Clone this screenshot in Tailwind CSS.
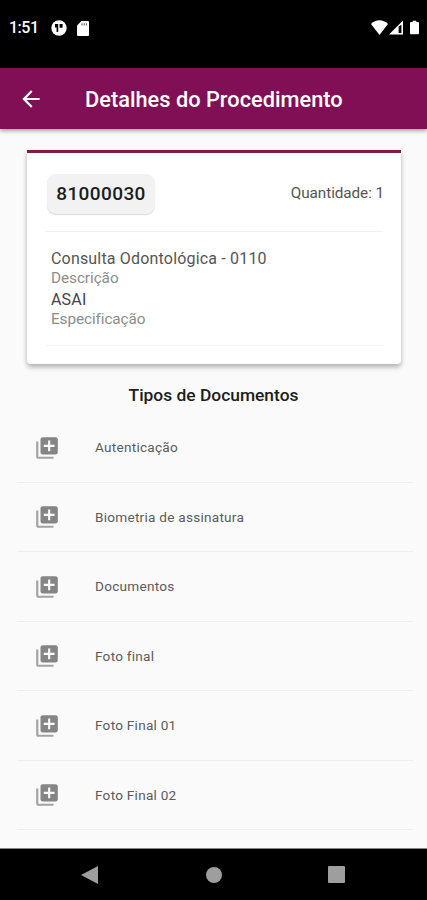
<!DOCTYPE html>
<html lang="pt-BR">
<head>
  <meta charset="UTF-8">
  <meta name="viewport" content="width=device-width, initial-scale=1.0">
  <script src="https://cdn.jsdelivr.net/npm/@tailwindcss/browser@4"></script>
  <title>Detalhes do Procedimento</title>
</head>
<body class="h-[900px] flex flex-col overflow-hidden bg-[#fafafa] font-['Roboto',sans-serif]">
  <svg class="hidden">
    <symbol id="library-add" viewBox="0 0 24 24">
      <path opacity=".75" d="M4 6H2v14c0 1.1.9 2 2 2h14v-2H4V6z"/>
      <path d="M20 2H8c-1.1 0-2 .9-2 2v12c0 1.1.9 2 2 2h12c1.1 0 2-.9 2-2V4c0-1.1-.9-2-2-2zm-1 9h-4v4h-2v-4H9V9h4V5h2v4h4v2z"/>
    </symbol>
  </svg>

  <!-- status bar -->
  <div class="h-[68px] shrink-0 bg-black text-white flex items-start justify-between pl-[9px] pr-2 pt-[18px]">
    <div class="flex items-center h-5">
      <span class="w-[42px] text-base font-medium tracking-[-0.5px]">1:51</span>
      <svg class="size-4" viewBox="0 0 16 16">
        <circle cx="8" cy="8" r="7.7" fill="#fff"/>
        <path d="M4 4h3.2v8H5.6V7.5H4zM8.6 4h3v3.700h-3z" fill="#000"/>
      </svg>
      <svg class="w-3 h-[15px] ml-[10px]" viewBox="0 0 12 15">
        <path d="M4.500 0H11a1 1 0 0 1 1 1v13a1 1 0 0 1-1 1H1a1 1 0 0 1-1-1V4.500z" fill="#fff"/>
        <path d="M4.500 2.200h1v2.300h-1zM6.700 2.200h1v2.300h-1zM8.900 2.200h1v2.300h-1z" fill="#555"/>
      </svg>
    </div>
    <div class="flex items-center h-[18px]">
      <svg class="w-[17px] h-[15px]" viewBox="0 0 17 15">
        <path d="M8.500 15 0 4C5-.9 12-.9 17 4z" fill="#fff"/>
      </svg>
      <svg class="w-[14px] h-[15px] ml-px" viewBox="0 0 15 15">
        <path fill-rule="evenodd" d="M15 0v15H0zM10.300 6.500v7h3v-9z" fill="#fff"/>
      </svg>
      <svg class="w-[9px] h-[15px] ml-[7px]" viewBox="0 0 10 15">
        <path d="M3 0h4v1.500h2a1 1 0 0 1 1 1V14a1 1 0 0 1-1 1H1a1 1 0 0 1-1-1V2.500a1 1 0 0 1 1-1h2z" fill="#fff"/>
      </svg>
    </div>
  </div>

  <!-- app bar -->
  <header class="h-[61px] shrink-0 bg-[#810f55] text-white flex items-center pl-[18px] shadow-[0_2px_4px_rgba(0,0,0,0.35)]">
    <svg class="size-[26px]" viewBox="0 0 24 24" fill="currentColor">
      <path d="M20 11H7.830l5.590-5.590L12 4l-8 8 8 8 1.410-1.410L7.830 13H20v-2z"/>
    </svg>
    <h1 class="ml-[41px] pt-[2px] text-[21.8px] leading-7 font-medium">Detalhes do Procedimento</h1>
  </header>

  <main class="grow min-h-0">
    <section class="mt-[21px] ml-[27px] w-[374px] h-[214px] bg-white border-t-[3px] border-[#7d1f42] rounded-b-[4px] shadow-[0_3px_5px_rgba(0,0,0,0.3)] px-[18px]">
      <div class="h-[79px] flex items-center justify-between border-b border-[#f0f0f0]">
        <span class="ml-[2px] mt-[3px] w-[108px] h-10 flex items-center justify-center rounded-[9px] bg-[#f2f2f2] pt-px text-[19px] font-medium tracking-[0.4px] text-[#1c1c1c] shadow-[0_1px_1px_rgba(0,0,0,0.15)]">81000030</span>
        <span class="mt-[3px] mr-[-1px] text-[15.3px] tracking-[-0.08px] text-[#555]">Quantidade: 1</span>
      </div>
      <div class="h-[114px] pt-[17px] pl-[6px] border-b border-[#f3f3f3] text-[15.3px]">
        <p class="leading-5 text-base tracking-[0.18px] text-[#555]">Consulta Odontológica - 0110</p>
        <p class="leading-[18px] tracking-[-0.05px] text-[#8c8c8c]">Descrição</p>
        <p class="mt-[3px] leading-5 text-base tracking-[0.18px] text-[#444]">ASAI</p>
        <p class="leading-[18px] tracking-[-0.08px] text-[#8c8c8c]">Especificação</p>
      </div>
    </section>

    <h2 class="mt-[19px] h-[30px] text-center text-[17.4px] leading-6 font-medium text-[#1c1c1c]">Tipos de Documentos</h2>

    <ul class="ml-[17px] mr-[14px] text-[13.6px] tracking-[0.25px] text-[#5c5c5c] fill-[#858585]">
      <li class="h-[69.5px] flex items-center border-b border-[#eee]">
        <svg class="size-[26px] ml-[17px] mr-[35px] mt-px"><use href="#library-add"/></svg>
        <span>Autenticação</span>
      </li>
      <li class="h-[69.5px] flex items-center border-b border-[#eee]">
        <svg class="size-[26px] ml-[17px] mr-[35px] mt-px"><use href="#library-add"/></svg>
        <span>Biometria de assinatura</span>
      </li>
      <li class="h-[69.5px] flex items-center border-b border-[#eee]">
        <svg class="size-[26px] ml-[17px] mr-[35px] mt-px"><use href="#library-add"/></svg>
        <span>Documentos</span>
      </li>
      <li class="h-[69.5px] flex items-center border-b border-[#eee]">
        <svg class="size-[26px] ml-[17px] mr-[35px] mt-px"><use href="#library-add"/></svg>
        <span>Foto final</span>
      </li>
      <li class="h-[69.5px] flex items-center border-b border-[#eee]">
        <svg class="size-[26px] ml-[17px] mr-[35px] mt-px"><use href="#library-add"/></svg>
        <span>Foto Final 01</span>
      </li>
      <li class="h-[69.5px] flex items-center border-b border-[#eee]">
        <svg class="size-[26px] ml-[17px] mr-[35px] mt-px"><use href="#library-add"/></svg>
        <span>Foto Final 02</span>
      </li>
    </ul>
  </main>

  <!-- navigation bar -->
  <nav class="h-[52px] shrink-0 bg-black border-t border-[#888] flex items-center fill-[#9e9e9e]">
    <svg class="w-[17px] h-[18px] ml-[81px]" viewBox="0 0 17 18"><path d="M17 0v18L0 9z"/></svg>
    <svg class="size-4 ml-[108px]" viewBox="0 0 16 16"><circle cx="8" cy="8" r="8"/></svg>
    <svg class="size-[17px] ml-[106px]" viewBox="0 0 17 17"><rect width="17" height="17" rx="1"/></svg>
  </nav>
</body>
</html>
